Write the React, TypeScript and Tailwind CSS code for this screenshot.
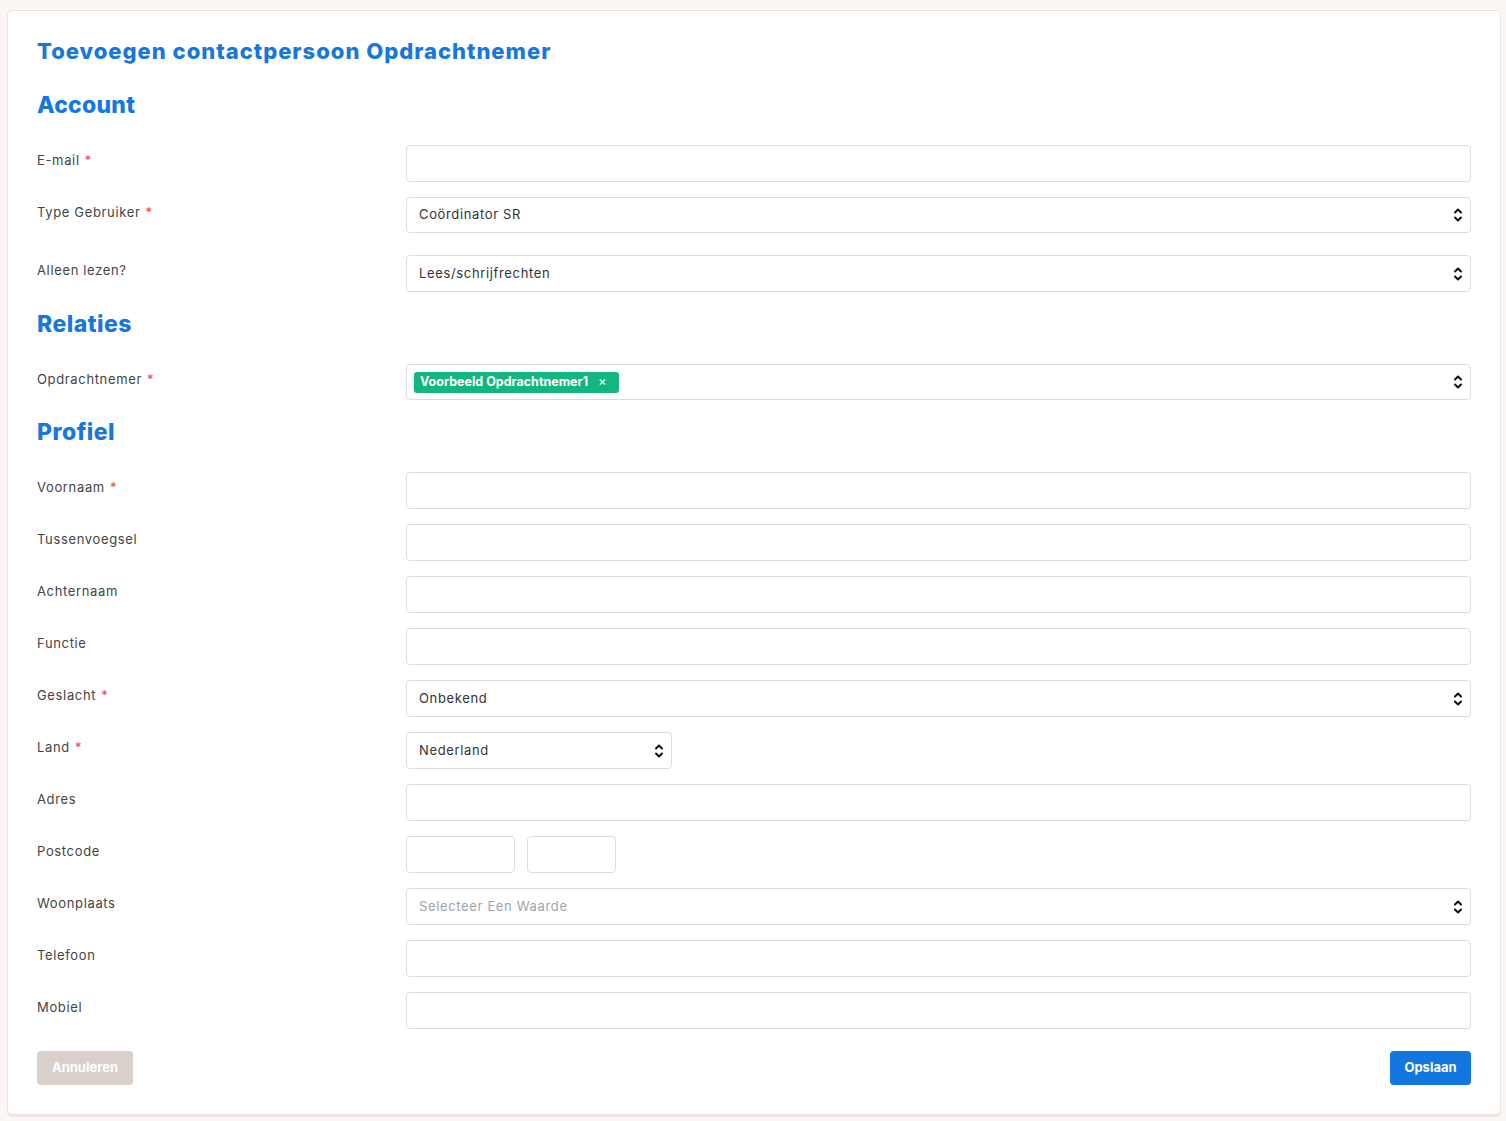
import React from 'react';

const font = { fontFamily: '"Inter", "Open Sans", sans-serif' };

function Chevrons() {
  return (
    <svg width="10" height="18" viewBox="0 0 10 18" fill="none" className="shrink-0">
      <path d="M2 6.5 L5 3.5 L8 6.5" stroke="#111" strokeWidth="2" strokeLinecap="round" strokeLinejoin="round" />
      <path d="M2 11.5 L5 14.5 L8 11.5" stroke="#111" strokeWidth="2" strokeLinecap="round" strokeLinejoin="round" />
    </svg>
  );
}

function Label({ text, required }: { text: string; required?: boolean }) {
  return (
    <div className="w-[369px] shrink-0 pt-[5px] text-[13px] leading-5 tracking-[0.05em] text-[#444]">
      {text}
      {required && <span className="ml-[5px] text-[#ef4444]">*</span>}
    </div>
  );
}

function Input({ className = 'flex-1' }: { className?: string }) {
  return <div className={`h-[37px] rounded-[4px] border border-[#dcdde3] bg-white ${className}`} />;
}

function Select({
  value,
  placeholder,
  className = 'flex-1',
  children,
}: {
  value?: string;
  placeholder?: boolean;
  className?: string;
  children?: React.ReactNode;
}) {
  return (
    <div
      className={`flex h-[37px] items-center justify-between rounded-[4px] border border-[#dcdde3] bg-white pl-[12px] pr-[7px] ${className}`}
    >
      {children ?? (
        <span className={`text-[13px] tracking-[0.05em] ${placeholder ? 'text-[#9ca3af]' : 'text-[#333]'}`}>
          {value}
        </span>
      )}
      <Chevrons />
    </div>
  );
}

function Row({ children, className = 'mb-[15px]' }: { children: React.ReactNode; className?: string }) {
  return <div className={`flex ${className}`}>{children}</div>;
}

function Heading({ children }: { children: React.ReactNode }) {
  return (
    <h2 className="mb-[25px] pt-[2px] text-[23px] font-extrabold leading-[30px] tracking-[0.02em] text-[#1677e0]">
      {children}
    </h2>
  );
}

export default function App() {
  return (
    <div className="min-h-[1121px] bg-[#fcf7f4] pb-[8px] pl-[7px] pr-[5px] pt-[10px]" style={font}>
      <div className="rounded-[5px] border border-[#ece5e1] bg-white px-[29px] pb-[29px] pt-[26px] shadow-[0_2px_0_#ece6e3]">
        <h1 className="mb-[25px] text-[22px] font-extrabold leading-[28px] tracking-[0.045em] text-[#1677e0]">
          Toevoegen contactpersoon Opdrachtnemer
        </h1>

        <h2 className="mb-[25px] text-[23px] font-extrabold leading-[30px] tracking-[0.01em] text-[#1677e0]">
          Account
        </h2>
        <Row>
          <Label text="E-mail" required />
          <Input />
        </Row>
        <Row className="mb-[22px]">
          <Label text="Type Gebruiker" required />
          <Select value="Coördinator SR" className="flex-1 !h-[36px]" />
        </Row>
        <Row>
          <Label text="Alleen lezen?" />
          <Select value="Lees/schrijfrechten" />
        </Row>

        <Heading>Relaties</Heading>
        <Row>
          <Label text="Opdrachtnemer" required />
          <Select className="flex-1 !h-[36px] !pl-[7px]">
            <span className="flex h-[21px] items-center gap-[10px] rounded-[3px] bg-[#13b67f] pl-[6px] pr-[12px] text-[12.5px] font-bold text-white">
              Voorbeeld Opdrachtnemer1
              <span className="text-[13px] font-normal">×</span>
            </span>
          </Select>
        </Row>

        <Heading>Profiel</Heading>
        <Row>
          <Label text="Voornaam" required />
          <Input />
        </Row>
        <Row>
          <Label text="Tussenvoegsel" />
          <Input />
        </Row>
        <Row>
          <Label text="Achternaam" />
          <Input />
        </Row>
        <Row>
          <Label text="Functie" />
          <Input />
        </Row>
        <Row>
          <Label text="Geslacht" required />
          <Select value="Onbekend" />
        </Row>
        <Row>
          <Label text="Land" required />
          <Select value="Nederland" className="w-[266px]" />
        </Row>
        <Row>
          <Label text="Adres" />
          <Input />
        </Row>
        <Row>
          <Label text="Postcode" />
          <div className="flex gap-[12px]">
            <Input className="w-[109px]" />
            <Input className="w-[89px]" />
          </div>
        </Row>
        <Row>
          <Label text="Woonplaats" />
          <Select value="Selecteer Een Waarde" placeholder />
        </Row>
        <Row>
          <Label text="Telefoon" />
          <Input />
        </Row>
        <Row>
          <Label text="Mobiel" />
          <Input />
        </Row>

        <div className="mt-[22px] flex items-center justify-between">
          <button className="h-[34px] w-[96px] rounded-[4px] bg-[#d9d0cc] text-[13px] font-bold text-white">
            Annuleren
          </button>
          <button className="h-[34px] w-[81px] rounded-[4px] bg-[#1277e1] text-[13px] font-bold text-white">
            Opslaan
          </button>
        </div>
      </div>
    </div>
  );
}
